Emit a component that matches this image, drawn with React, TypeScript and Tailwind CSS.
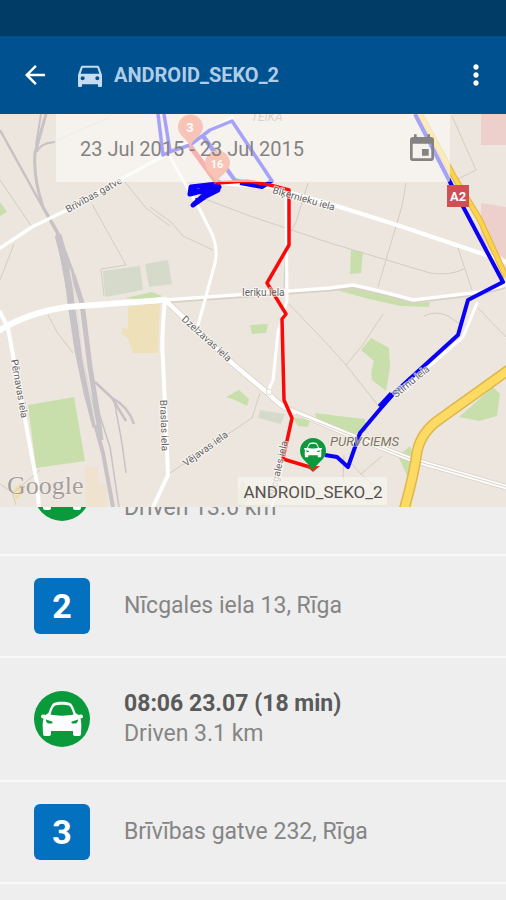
import { MdArrowBack, MdDirectionsCar, MdEvent, MdMoreVert } from "react-icons/md";

type Stop = { kind: "stop"; number: number; address: string };
type Trip = { kind: "trip"; time: string; distance: string };

const timeline: (Stop | Trip)[] = [
  { kind: "trip", time: "07:12 23.07 (32 min)", distance: "Driven 13.6 km" },
  { kind: "stop", number: 2, address: "Nīcgales iela 13, Rīga" },
  { kind: "trip", time: "08:06 23.07 (18 min)", distance: "Driven 3.1 km" },
  { kind: "stop", number: 3, address: "Brīvības gatve 232, Rīga" },
];

/** Front view of a car on a 56 x 56 canvas. */
function CarFront() {
  return (
    <>
      <path
        fill="#fff"
        fillRule="evenodd"
        d="M19 12.5C22 10 34 10 37 12.5C39 14.500 40.500 19 41.500 22L44.500 24C46 23 49 23.500 49 25L48.500 27L46.500 27.500C47.300 30 47.500 34 47.200 37.500L47 43Q47 45 45 45H41Q39 45 39 43V40H17V43Q17 45 15 45H11Q9 45 9 43L8.800 37.500C8.500 34 8.700 30 9.500 27.500L7.500 27L7 25C7 23.500 10 23 11.500 24L14.500 22C15.500 19 17 14.500 19 12.500ZM21 14.500C18.500 16.500 17.500 20 16.500 23.500C22 25 34 25 39.500 23.500C38.500 20 37.500 16.500 35 14.500C31 13.400 25 13.400 21 14.500Z"
      />
      <path fill="#0a9a3c" d="M12 28.500L18 30.500Q19.500 31.500 18 32.500H14.500Q12 32 12 28.500ZM44 28.500L38 30.500Q36.500 31.500 38 32.500H41.500Q44 32 44 28.500Z" />
    </>
  );
}

function TripBadge() {
  return (
    <svg viewBox="0 0 56 56" className="size-14 shrink-0" aria-hidden="true">
      <circle cx="28" cy="28" r="28" fill="#0a9a3c" />
      <CarFront />
    </svg>
  );
}

function Pin({ x, y, label, size }: { x: number; y: number; label: string; size: number }) {
  return (
    <g transform={`translate(${x} ${y})`}>
      <path d="M0 0C-2 -8 -12 -11 -12 -20A12.500 12.500 0 0 1 13 -20C13 -11 2 -8 0 0Z" fill="#f0603f" />
      <text x="0" y="-15" fontSize={size} fontWeight="700" fill="#fff" textAnchor="middle">{label}</text>
    </g>
  );
}

function RouteMap() {
  return (
    <svg
      viewBox="0 114 506 393"
      preserveAspectRatio="xMidYMid slice"
      className="block h-[393px] w-full bg-[#ede6df] font-[Roboto,sans-serif]"
      role="img"
      aria-label="Route map"
    >
      {/* parks, blocks and built-up areas */}
      <g fill="#c9dfab">
        <path d="M28 405L74 397L85 461L36 468Z" />
        <path d="M0 202L7 212L0 216Z" />
        <path d="M351 250L363 252L361 273L350 274Z" />
        <path d="M333 289L352 287L375 292L413 303L430 302L429 307L400 306L365 298Z" />
        <path d="M250 325L268 324L266 333L252 334Z" />
        <path d="M226 397L239 390L249 399L247 406L235 400Z" />
        <path d="M361 350L371 338L389 348L390 367L386 391L372 380Q370 372 374 361Z" />
        <path d="M320 414L365 419L367 431L350 435L320 422Z" />
        <path d="M292 417L310 420L308 427L298 426ZM315 413L332 415L330 428L318 424Z" />
        <path d="M459 417L493 387L500 394L497 416L479 421Z" />
        <path d="M398 456L410 446L413 455L408 478Z" />
        <path d="M125 298L152 292L162 296L150 301Z" />
        <path d="M239 490L243 479L248 500L239 507Z" fillOpacity="0.5" />
      </g>
      <g fill="#d5dacb">
        <path d="M103 271L140 266L143 290L105 297Z" />
        <path d="M145 264L168 260L172 284L149 287Z" />
        <path d="M260 410L285 414L281 424L258 418Z" />
      </g>
      <path d="M128 307L160 303L158 353L133 353L128 338L121 333L122 328L128 329Z" fill="#eee0b9" />
      <path d="M85 466L98 468L98 483L107 485L106 507L86 507Z" fill="#efe2cf" />
      <path d="M13 490L20 483L24 492L16 500Z" fill="#f2dfa5" />
      <path d="M481 114H506V145H481ZM481 203L506 207V259L481 244Z" fill="#edd0cc" />

      {/* side streets */}
      <g fill="none" stroke="#d3ccc0" strokeWidth="1">
        <path d="M0 180L32 227M0 280L14 244M92 204L126 265L101 269L104 296M125 182L146 208L170 226" />
        <path d="M150 207L171 222L183 236L213 250M205 199L250 216L330 243L430 273Q450 276 464 269M308 183L296 222L286 240L284 288" />
        <path d="M406 183L402 206L378 287M458 248L472 290M452 116L476 170L448 184" />
        <path d="M48 315L57 332L73 353M289 304L330 347L346 365L380 408M346 365L362 346L383 314M424 316Q435 310 448 316L460 324" />
        <path d="M478 308L506 337M170 473L252 418L260 393M343 480L344 455M361 474L382 456M361 474L350 462M361 474L378 490" />
        <path d="M0 484L12 492L16 505M14 492L40 470M57 140L110 117" />
      </g>

      {/* railway */}
      <g fill="none" stroke="#c6c2c5" strokeLinejoin="round">
        <path d="M0 130L37 197L57 233L70 303" strokeWidth="2.500" />
        <path d="M46 114L35 153Q33 177 43 207L58 233L72 270L81 303" strokeWidth="3" />
        <path d="M41 114L36 145M37 152Q40 143 55 142" strokeWidth="2" />
        <path d="M58 235Q68 270 71 303L78 350L87 393L96 427" strokeWidth="7" />
        <path d="M73 275L82 303L90 367L97 410L101 440" strokeWidth="5" />
        <path d="M94 420L103 453L113 507" strokeWidth="4" />
        <path d="M95 382L112 398Q128 406 134 424M112 398L126 421" strokeWidth="2.500" />
        <path d="M114 400L122 443L126 473M98 410L110 447L119 507" strokeWidth="1.500" />
      </g>
      <path d="M70 270L76 300L83 360L96 425" fill="none" stroke="#e4dfdd" strokeWidth="1.500" />

      {/* streets: casing, then surface */}
      <g fill="none" stroke="#d8d0c5" strokeLinejoin="round">
        <path d="M0 330Q30 312 67 307L165 301L330 289L353 286Q385 293 413 301L480 293L506 286" strokeWidth="5" />
        <path d="M165 300L183 317L232 363L270 395Q279 405 290 410L357 438L413 460L506 487" strokeWidth="6" />
      </g>
      <g fill="none" stroke="#fff" strokeLinejoin="round" strokeLinecap="round">
        <path d="M0 330Q30 312 67 307L165 300" strokeWidth="6" />
        <path d="M165 300L330 288L353 285Q385 292 413 300L480 292L506 285" strokeWidth="3.500" />
        <path d="M0 248L32 227L67 210L123 178L160 158L232 118" strokeWidth="3.500" />
        <path d="M0 312L8 328L17 377L37 483L39 507" strokeWidth="4" />
        <path d="M165 300Q161 340 163 360L168 475L153 507" strokeWidth="4" />
        <path d="M165 300L183 317L232 363L270 395Q279 405 290 410L357 438L413 460L506 487" strokeWidth="4.500" />
        <path d="M170 157L187 187L200 210L213 236Q218 250 215 263L205 300L198 325" strokeWidth="3" />
        <path d="M286 192L287 300L278 333L273 380L268 392" strokeWidth="3" />
        <path d="M218 183L270 187L340 207L397 225L480 253L506 262" strokeWidth="4" />
        <path d="M477 303L463 337L433 363L392 397" strokeWidth="3" />
        <path d="M292 413L286 450L272 507" strokeWidth="2.500" />
      </g>
      <path d="M296 414L357 438L413 460L506 487" fill="none" stroke="#d8d0c5" strokeWidth="1" />
      <circle cx="269" cy="392" r="3" fill="#fff" stroke="#e2dbd1" />

      {/* motorways */}
      <g fill="none">
        <path d="M420 114L453 175L480 220L506 277" stroke="#e2b53c" strokeWidth="6" />
        <path d="M420 114L453 175L480 220L506 277" stroke="#fcd34c" strokeWidth="4" />
        <path d="M510 369L440 419Q421 432 417 452Q414 475 404 510" stroke="#dfb64a" strokeWidth="11" />
        <path d="M510 369L440 419Q421 432 417 452Q414 475 404 510" stroke="#fddb63" strokeWidth="8" />
      </g>

      {/* driven route */}
      <g fill="none" stroke="#0a00f5" strokeLinejoin="round" strokeWidth="4">
        <path d="M415 114L450 182L503 282L468 300L458 335L392 395L360 433L348 467L337 457L325 455" />
        <path d="M392 394L380 407" strokeWidth="6" />
        <path d="M158 114L163 155L172 151L190 145M164 114L170 151M190 145L210 130L232 121L272 181L262 186L235 180L203 135M190 145L217 182M203 137L235 181" strokeWidth="3.500" />
        <path d="M217 184L191 187L190 194L212 188L193 205L219 187L204 192L191 191M218 180V190L196 201" strokeWidth="5" />
        <path d="M240 183L262 187L270 182" />
      </g>
      <path d="M190 146L217 183" stroke="#f2302c" strokeWidth="5" />
      <path
        d="M217 183L247 181L270 185L289 190V245L267 283L286 314L282 319L284 400L292 418L283 459L313 468"
        fill="none"
        stroke="#fb0808"
        strokeWidth="3.500"
        strokeLinejoin="round"
      />
      <Pin x={190} y={147} label="3" size={13} />
      <Pin x={217} y={183} label="16" size={11} />

      {/* street names */}
      <g fill="#686460" stroke="#fff" strokeWidth="2" strokeOpacity="0.7" paintOrder="stroke" fontSize="10">
        <text transform="translate(68 213) rotate(-29)">Brīvības gatve</text>
        <text transform="translate(272 193) rotate(16)">Biķernieku iela</text>
        <text x="242" y="296">Ieriķu iela</text>
        <text transform="translate(181 320) rotate(42)">Dzelzavas iela</text>
        <text transform="translate(11 360) rotate(80)">Pērnavas iela</text>
        <text transform="translate(160 400) rotate(88)">Braslas iela</text>
        <text transform="translate(186 467) rotate(-36)">Vējavas iela</text>
        <text transform="translate(396 398) rotate(-39)">Stirnu iela</text>
        <text transform="translate(275 497) rotate(-77)">Nīcgales iela</text>
      </g>
      <text x="251" y="121" fontSize="12" fontStyle="italic" fill="#8f8981">TEIKA</text>
      <text x="330" y="446" fontSize="13" fontStyle="italic" fill="#7b7664" stroke="#f5f1e8" strokeWidth="2" strokeOpacity="0.6" paintOrder="stroke">PURVCIEMS</text>

      <rect x="447" y="185" width="22" height="22" fill="#cf4f55" />
      <text x="458" y="201" fontSize="13" fontWeight="700" fill="#fff" textAnchor="middle">A2</text>

      <text x="7" y="494" fontSize="26" className="font-[Liberation_Serif,serif]" fill="#a49e98" stroke="#fff" strokeWidth="1" strokeOpacity="0.6" paintOrder="stroke">Google</text>

      {/* current vehicle position */}
      <rect x="238" y="477" width="149" height="28" rx="2" fill="#f7f4ee" fillOpacity="0.7" />
      <text x="313" y="498" fontSize="17" fill="#55524f" textAnchor="middle">ANDROID_SEKO_2</text>
      <path d="M306 466L313 472L320 466Z" fill="#e0301e" />
      <path d="M313 471C311 464 300 460 300 451A13 13 0 0 1 326 451C326 460 315 464 313 471Z" fill="#0a9a3c" />
      <g transform="translate(301 438) scale(0.430)">
        <CarFront />
      </g>
    </svg>
  );
}

export default function App() {
  return (
    <div className="flex h-screen flex-col overflow-hidden bg-[#eeeeee] font-[Roboto,sans-serif]">
      <div className="h-9 shrink-0 bg-[#003c66]" />
      <header className="flex h-[78px] shrink-0 items-center bg-[#00518f] pr-3.5 pl-5">
        <button type="button" aria-label="Back" className="text-white">
          <MdArrowBack className="size-[30px]" />
        </button>
        <MdDirectionsCar className="ml-6 size-8 text-[#c6dcf0]" aria-hidden="true" />
        <h1 className="ml-2 grow text-xl font-bold text-[#b0cde8]">ANDROID_SEKO_2</h1>
        <button type="button" aria-label="More options" className="text-white">
          <MdMoreVert className="size-8" />
        </button>
      </header>

      <section className="relative shrink-0">
        <RouteMap />
        <button
          type="button"
          className="absolute inset-x-14 top-0 flex h-[68px] items-center justify-between rounded-b-xs bg-[#fafaf7]/65 pt-0.5 pr-3 pl-6 text-xl text-[#858381]"
        >
          <span>23 Jul 2015 - 23 Jul 2015</span>
          <MdEvent className="size-8 text-[#858381]" aria-hidden="true" />
        </button>
      </section>

      <main className="grow overflow-hidden">
        <ul className="-mt-[75px] text-[23px] leading-[30px] text-[#858585]">
          {timeline.map((item) =>
            item.kind === "trip" ? (
              <li key={item.time} className="flex h-[124px] items-center gap-[34px] border-b-2 border-[#f8f8f8] px-[34px]">
                <TripBadge />
                <div>
                  <p className="font-bold text-[#5a5a5a]">{item.time}</p>
                  <p>{item.distance}</p>
                </div>
              </li>
            ) : (
              <li key={item.address} className="flex h-[102px] items-center gap-[34px] border-b-2 border-[#f8f8f8] px-[34px]">
                <span className="flex size-14 shrink-0 items-center justify-center rounded-md bg-[#0470c0] text-[34px] font-bold text-white">
                  {item.number}
                </span>
                <p>{item.address}</p>
              </li>
            ),
          )}
        </ul>
      </main>
    </div>
  );
}
